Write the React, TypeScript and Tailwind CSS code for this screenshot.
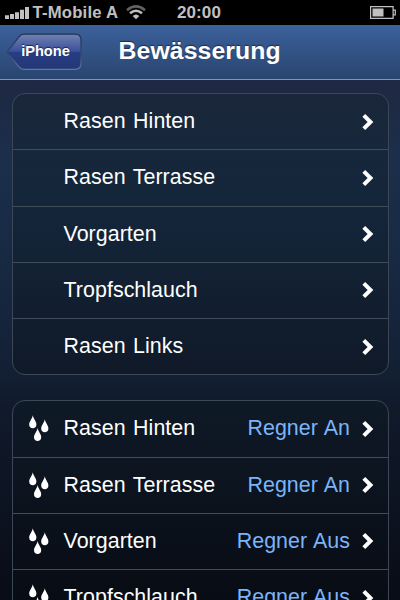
import React from 'react';

const plain = ['Rasen Hinten', 'Rasen Terrasse', 'Vorgarten', 'Tropfschlauch', 'Rasen Links'];
const sprinklers = [
  { name: 'Rasen Hinten', state: 'Regner An' },
  { name: 'Rasen Terrasse', state: 'Regner An' },
  { name: 'Vorgarten', state: 'Regner Aus' },
  { name: 'Tropfschlauch', state: 'Regner Aus' },
];

function Chevron() {
  return (
    <svg width="12" height="18" viewBox="0 0 12 18" className="shrink-0">
      <path d="M1.8 2.3 L8.5 9 L1.8 15.7" fill="none" stroke="#fff" strokeWidth="4" />
    </svg>
  );
}

function Drops() {
  const drop = 'M0 0 C0.8 4 3.6 6 3.6 9.3 C3.6 11.8 2 13 0 13 C-2 13 -3.6 11.8 -3.6 9.3 C-3.6 6 -0.8 4 0 0 Z';
  return (
    <svg width="20" height="27" viewBox="0 0 20 27" className="shrink-0" fill="#fff">
      <path d={drop} transform="translate(3.8 0.3)" />
      <path d={drop} transform="translate(15.8 4.2)" />
      <path d={drop} transform="translate(8.6 13)" />
    </svg>
  );
}

function Row({ name, state, first }: { name: string; state?: string; first: boolean }) {
  return (
    <div className={`flex items-center pr-[13.5px] ${first ? 'h-[55.25px]' : 'h-[56.25px] border-t border-[#414c5b]'}`}>
      <div className="flex w-[51px] shrink-0 pl-[16px]">{state && <Drops />}</div>
      <span className="flex-1 whitespace-nowrap pb-px text-[21.4px] leading-6 tracking-[0.05px] text-white [word-spacing:1.5px]">{name}</span>
      {state && <span className="mr-[12px] whitespace-nowrap pb-px text-[21.4px] leading-6 tracking-[0.05px] text-[#7ab5fa] [word-spacing:1px]">{state}</span>}
      <Chevron />
    </div>
  );
}

export default function App() {
  return (
    <div className="flex h-[600px] w-[400px] flex-col overflow-hidden bg-[linear-gradient(#1f2842_80px,#1b2f4c_160px,#15243b_330px,#111a2b_410px,#080c16_600px)] font-['Liberation_Sans',Arial,sans-serif]">
      <header className="grid h-[25px] shrink-0 grid-cols-[1fr_auto_1fr] items-center bg-black text-[17px] font-bold leading-5 text-[#c0c0c0]">
        <div className="flex items-center pl-[5px]">
          <svg width="25" height="14" viewBox="0 0 25 14" fill="#c0c0c0">
            <path d="M0 9.3h4V13H0zM5 8h4v5H5zM10 6.3h4V13h-4zM15 3.8h4V13h-4zM20 1h4v12h-4z" />
          </svg>
          <span className="ml-[2.5px] whitespace-nowrap text-[16.7px] tracking-[0.2px]">T-Mobile A</span>
          <svg width="20" height="15" viewBox="0 0 20 15" className="ml-[8px]" fill="none">
            <path d="M1 5.2 Q10 -2.4 19 5.2" stroke="#626262" strokeWidth="2.5" />
            <path d="M4 8.3 Q10 3.2 16 8.3" stroke="#c0c0c0" strokeWidth="2.5" />
            <path d="M6.7 11 Q10 8 13.3 11 L10 14.3 Z" fill="#c0c0c0" />
          </svg>
        </div>
        <span className="relative -left-px tracking-[0.1px]">20:00</span>
        <div className="flex justify-end pr-[4px]">
          <svg width="26" height="13" viewBox="0 0 26 13" fill="none">
            <path d="M.6 .6h22.5v3.6h2.2v4.6h-2.2v3.6H.6z M23.1 4.2v4.6" stroke="#c0c0c0" strokeWidth="1.2" />
            <path d="M2.5 2.5h11v8h-11z" fill="#c0c0c0" />
          </svg>
        </div>
      </header>
      <nav className="flex h-[55px] shrink-0 items-center border-b border-[#8194b2] bg-linear-to-b from-[#3c619c] to-[#28456f]">
        <button className="relative ml-[5px] h-[38px] w-[78px] shrink-0 text-[14.6px] font-bold text-white">
          <svg width="78" height="38" viewBox="0 0 78 38" className="absolute inset-0">
            <defs>
              <linearGradient id="back" x1="0" y1="0" x2="0" y2="1">
                <stop offset="0" stopColor="#7181b0" />
                <stop offset=".49" stopColor="#3b509a" />
                <stop offset=".51" stopColor="#273d84" />
                <stop offset="1" stopColor="#243776" />
              </linearGradient>
              <linearGradient id="rim" x1="0" y1="0" x2="0" y2="1">
                <stop offset="0" stopColor="#233354" />
                <stop offset=".6" stopColor="#36496f" />
                <stop offset="1" stopColor="#61769b" />
              </linearGradient>
            </defs>
            <path d="M19 1.2H70Q76 1.2 76 7V30.5Q76 36.3 70 36.3H19Q16 36.3 14 33.8L2 19L14 3.8Q16 1.2 19 1.2Z" fill="url(#back)" stroke="url(#rim)" strokeWidth="1.3" />
          </svg>
          <span className="relative left-[1.5px] [text-shadow:0_-1px_1px_#15244d]">iPhone</span>
        </button>
        <h1 className="mb-[2px] ml-[35.5px] whitespace-nowrap text-[24.8px] font-bold leading-7 tracking-[0.1px] text-white [text-shadow:0_-1px_1px_#1b2b49]">Bewässerung</h1>
      </nav>
      <main className="flex flex-col gap-[25px] px-[11.5px] pt-[13px]">
        <section className="rounded-[13px] border border-[#3b4757] bg-linear-to-b from-[#1a273a] via-[#14263b] via-[40%] to-[#101928]">
          {plain.map((name, i) => <Row key={name} name={name} first={i === 0} />)}
        </section>
        <section className="rounded-[13px] border border-[#3b4757] bg-linear-to-b from-[#0f1a27] to-[#070a12]">
          {sprinklers.map((item, i) => <Row key={item.name} {...item} first={i === 0} />)}
        </section>
      </main>
    </div>
  );
}
